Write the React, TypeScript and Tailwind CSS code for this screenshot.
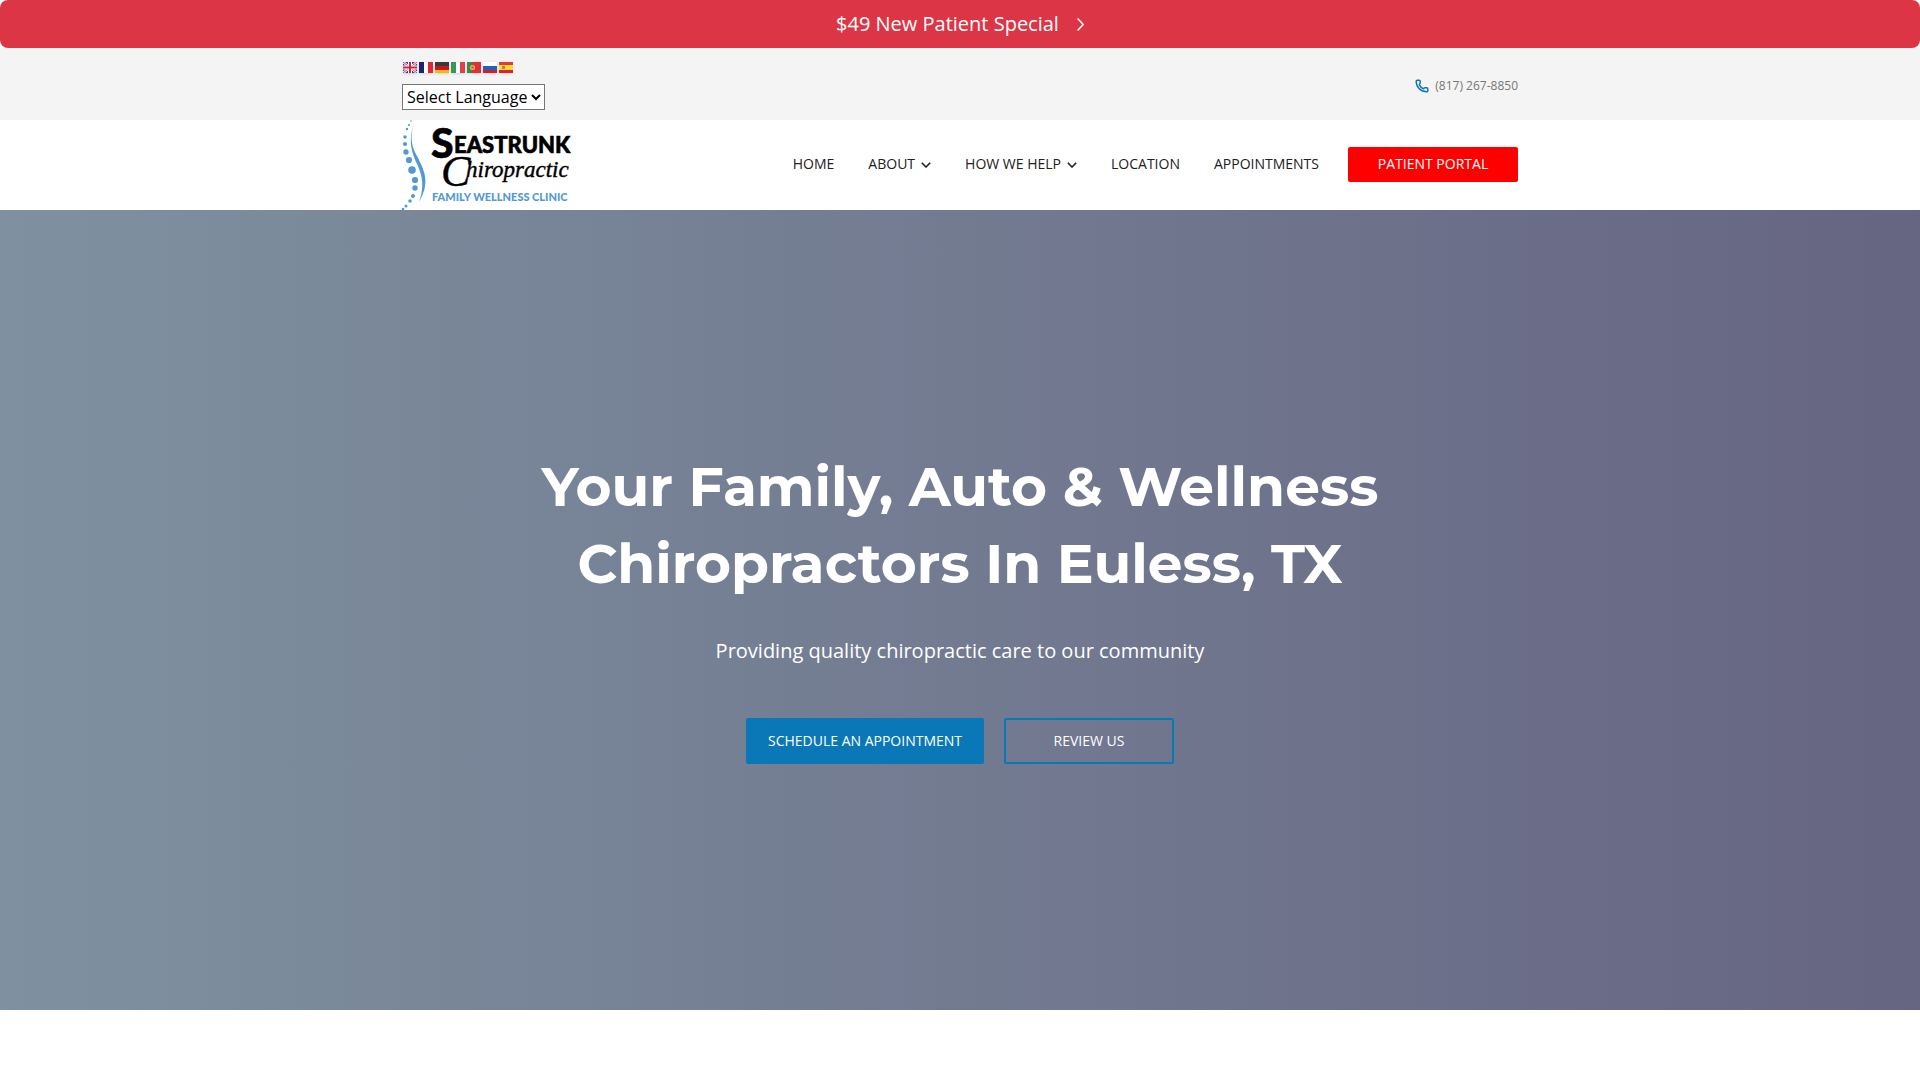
import { type ReactNode } from 'react'
import { Phone } from 'lucide-react'

const flags: { label: string; art: ReactNode }[] = [
  {
    label: 'English',
    art: (
      <>
        <rect width="14" height="11" fill="#2b3f8f" />
        <path d="M0 0L14 11M14 0L0 11" stroke="#fff" strokeWidth="2.4" />
        <path d="M0 0L14 11M14 0L0 11" stroke="#e0334a" strokeWidth="1" />
        <path d="M7 0V11M0 5.5H14" stroke="#fff" strokeWidth="4" />
        <path d="M7 0V11M0 5.5H14" stroke="#d8203a" strokeWidth="2" />
      </>
    ),
  },
  {
    label: 'French',
    art: (
      <>
        <rect width="5" height="11" fill="#1c2277" />
        <rect x="5" width="4" height="11" fill="#fff" />
        <rect x="9" width="5" height="11" fill="#e32636" />
      </>
    ),
  },
  {
    label: 'German',
    art: (
      <>
        <rect width="14" height="4" fill="#3a3a3a" />
        <rect y="4" width="14" height="4" fill="#c9151b" />
        <rect y="8" width="14" height="3" fill="#f2b90c" />
      </>
    ),
  },
  {
    label: 'Italian',
    art: (
      <>
        <rect width="5" height="11" fill="#2f9a5b" />
        <rect x="5" width="4" height="11" fill="#fff" />
        <rect x="9" width="5" height="11" fill="#e0404a" />
      </>
    ),
  },
  {
    label: 'Portuguese',
    art: (
      <>
        <rect width="5" height="11" fill="#3c8a4a" />
        <rect x="5" width="9" height="11" fill="#dd3038" />
        <circle cx="5.5" cy="5.5" r="2.6" fill="#e5b83a" />
        <circle cx="5.5" cy="5.5" r="1.2" fill="#d9534f" />
      </>
    ),
  },
  {
    label: 'Russian',
    art: (
      <>
        <rect width="14" height="4" fill="#fff" />
        <rect y="4" width="14" height="4" fill="#1f63b5" />
        <rect y="8" width="14" height="3" fill="#d81e2c" />
      </>
    ),
  },
  {
    label: 'Spanish',
    art: (
      <>
        <rect width="14" height="3" fill="#e5383b" />
        <rect y="3" width="14" height="5" fill="#fbd83a" />
        <rect y="8" width="14" height="3" fill="#d9262c" />
        <rect x="3" y="4" width="3" height="3" fill="#c8803a" />
      </>
    ),
  },
]

const navItems = [
  { label: 'Home', hasMenu: false },
  { label: 'About', hasMenu: true },
  { label: 'How We Help', hasMenu: true },
  { label: 'Location', hasMenu: false },
  { label: 'Appointments', hasMenu: false },
]

// vertebrae, top to bottom: x, y, radius
const dots = [
  [9, 1, 0.8],
  [7, 5, 1.1],
  [5, 9, 1.2],
  [3, 17, 1.8],
  [3, 24, 2.1],
  [4, 32, 2.7],
  [7, 40, 3.1],
  [10, 50, 3.8],
  [13, 60, 3.1],
  [13, 68, 2.7],
  [11, 76, 2.1],
  [8, 81, 1.8],
  [4, 86, 1.5],
  [1, 89, 1.3],
]

function Logo() {
  return (
    <svg viewBox="0 0 170 90" className="h-[90px] w-[170px] overflow-visible" role="img" aria-label="Seastrunk Chiropractic Family Wellness Clinic">
      <g fill="#5399d2">
        {dots.map(([x, y, r]) => (
          <circle key={y} cx={x} cy={y} r={r} />
        ))}
        <path d="M12 3C8 16 9 26 15 36C22 50 29 62 17 82C22 68 21 58 16 46C9 32 6 20 12 3Z" />
      </g>
      <g fontFamily="Lato, sans-serif" fontWeight="900">
        <text x="29" y="38" fontSize="41" stroke="#000" strokeWidth="0.6">
          S<tspan x="52" y="33" fontSize="22">EASTRUNK</tspan>
        </text>
        <text x="30" y="81" fontSize="11" fill="#5399d2">FAMILY WELLNESS CLINIC</text>
      </g>
      <text x="39" y="66" fontSize="44" fontFamily="'Liberation Serif', serif" fontStyle="italic" stroke="#000" strokeWidth="0.4">
        C<tspan x="64" y="57" fontSize="23">hiropractic</tspan>
      </text>
    </svg>
  )
}

export default function App() {
  return (
    <div className="min-h-screen bg-white font-['Open_Sans',sans-serif]">
      <a href="#special" className="flex h-12 items-center justify-center gap-[18px] rounded-lg bg-[#dc3545] text-xl text-white">
        $49 New Patient Special
        <svg viewBox="0 0 7 13" className="h-[13px] w-[7px]" fill="none" stroke="currentColor" strokeWidth="1.5">
          <path d="M0.6 0.6L6.2 6.5L0.6 12.4" />
        </svg>
      </a>

      <div className="bg-[#f4f4f4]">
        <div className="mx-auto flex h-[72px] max-w-[1116px] items-center justify-between">
          <div className="flex flex-col gap-2">
            <div className="flex h-[18px] items-center">
              {flags.map((flag) => (
                <a key={flag.label} href="#language" aria-label={flag.label} className="flex w-4 justify-center">
                  <svg viewBox="0 0 14 11" className="h-[11px] w-[14px] shadow-sm">{flag.art}</svg>
                </a>
              ))}
            </div>
            <select aria-label="Select Language" className="h-[26px] w-[143px] border border-[#767676] bg-white text-base text-black">
              <option>Select Language</option>
            </select>
          </div>
          <a href="tel:8172678850" className="flex items-center gap-1.5 pt-1 text-xs text-[#777777]">
            <Phone size={14} strokeWidth={2.5} className="text-[#0a77b7]" />
            (817) 267-8850
          </a>
        </div>
      </div>

      <header className="mx-auto flex h-[90px] max-w-[1116px] items-center justify-between">
        <a href="#home"><Logo /></a>
        <nav className="flex items-center gap-[34px] pb-0.5 text-sm text-[#212121] uppercase">
          {navItems.map((item) => (
            <a key={item.label} href="#nav" className="flex items-center gap-1.5">
              {item.label}
              {item.hasMenu && (
                <svg viewBox="0 0 10 6" className="mt-0.5 h-1.5 w-2.5" fill="none" stroke="currentColor" strokeWidth="1.6">
                  <path d="M0.8 0.8L5 5L9.2 0.8" />
                </svg>
              )}
            </a>
          ))}
          <a href="#portal" className="-ml-[5px] flex h-[35px] w-[170px] items-center justify-center rounded-xs bg-[#ff0000] text-white">
            Patient Portal
          </a>
        </nav>
      </header>

      <section className="flex h-[800px] flex-col items-center justify-center bg-linear-to-r from-[#7f91a0] to-[#666582] pb-2 text-center text-white">
        <h1 className="max-w-[900px] font-['Montserrat','Inter',sans-serif] text-[55px] leading-[77px] font-bold">
          Your Family, Auto &amp; Wellness Chiropractors In Euless, TX
        </h1>
        <p className="mt-[33px] text-xl leading-8">Providing quality chiropractic care to our community</p>
        <div className="mt-[51px] flex gap-5 text-sm uppercase">
          <a href="#schedule" className="flex h-[46px] w-[238px] items-center justify-center rounded-xs bg-[#0a77b7]">
            Schedule an Appointment
          </a>
          <a href="#review" className="flex h-[46px] w-[170px] items-center justify-center rounded-xs border-2 border-[#0a77b7]">
            Review Us
          </a>
        </div>
      </section>
    </div>
  )
}
